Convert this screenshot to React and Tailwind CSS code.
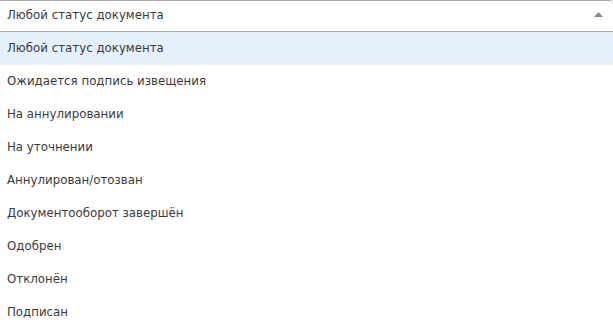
import React from "react";

const items = [
  "Любой статус документа",
  "Ожидается подпись извещения",
  "На аннулировании",
  "На уточнении",
  "Аннулирован/отозван",
  "Документооборот завершён",
  "Одобрен",
  "Отклонён",
  "Подписан",
];

export default function App() {
  return (
    <div className="w-[613px] h-[329px] overflow-hidden bg-white text-[#3a3a3a] text-[11.8px]" style={{ fontFamily: '"DejaVu Sans", Verdana, sans-serif' }}>
      <div className="h-[32px] flex items-center justify-between pl-[7px] pr-[10px] border-t border-b border-[#a9a9a9] rounded-tr-[4px]">
        <span>Любой статус документа</span>
        <svg width="9" height="5" viewBox="0 0 9 5" className="mb-[4px]"><path d="M0 5 L4.5 0 L9 5 Z" fill="#8a8a8a" /></svg>
      </div>
      <ul>
        {items.map((t, i) => (
          <li key={i} className={`h-[33px] flex items-center pl-[7px] ${i === 0 ? "bg-[#e5f1fd]" : ""}`}>{t}</li>
        ))}
      </ul>
    </div>
  );
}
